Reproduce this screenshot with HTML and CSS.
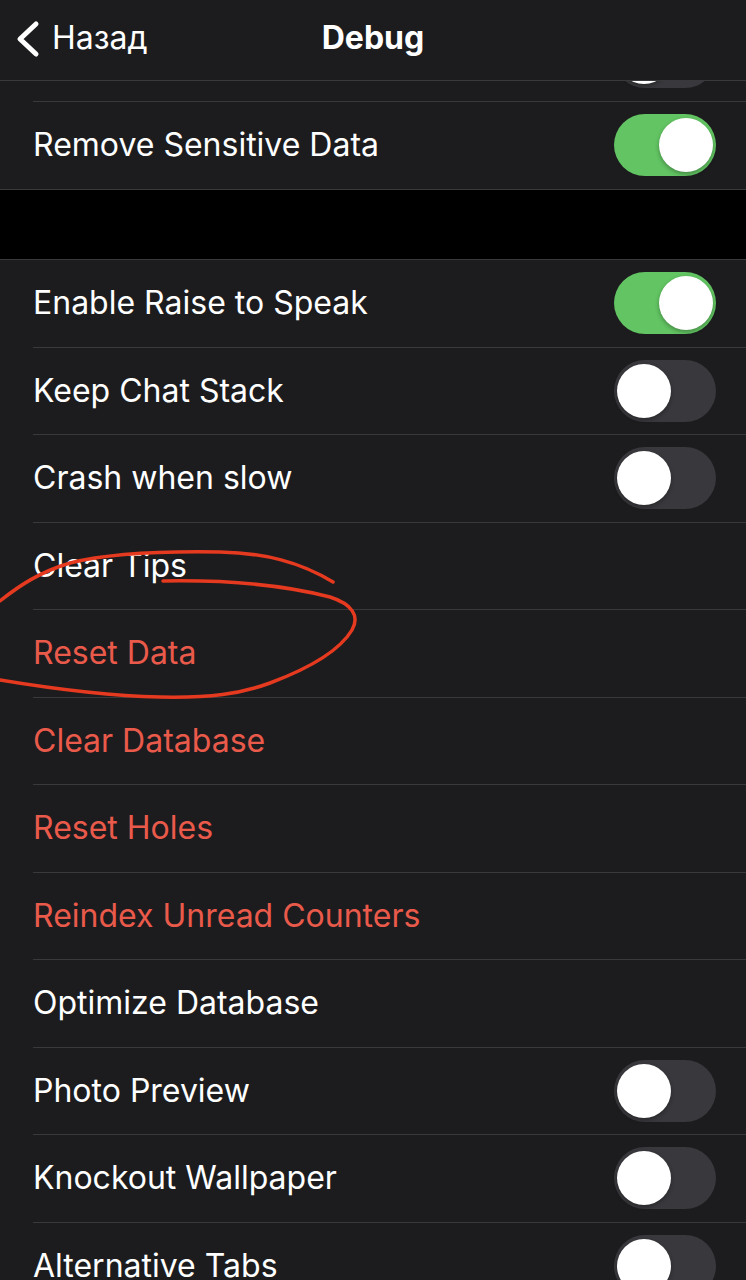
FILE: index.html
```html
<!DOCTYPE html>
<html lang="ru">
<head>
<meta charset="utf-8"/>
<meta name="viewport" content="width=device-width,initial-scale=1.0"/>
    <title>Debug</title>
    <link rel="stylesheet" href="styles.css">
</head>
<body>
<section id="screen">
    <header class="navbar">
        <a class="back" href="#">
            <svg class="chev" width="26" height="40" viewBox="0 0 26 40"><path d="M22 5 L6 20 L22 35" fill="none" stroke="#fff" stroke-width="5" stroke-linecap="round" stroke-linejoin="round"/></svg>
            <span>Назад</span>
        </a>
        <h1 class="title">Debug</h1>
    </header><!-- navbar -->

    <main class="scroll">
        <ul class="group group_first">
            <li class="row"><span class="label">Hidden</span><span class="toggle"></span></li>
            <li class="row"><span class="label">Remove Sensitive Data</span><span class="toggle on"></span></li>
        </ul>

        <div class="gap"></div>

        <ul class="group">
            <li class="row"><span class="label">Enable Raise to Speak</span><span class="toggle on"></span></li>
            <li class="row"><span class="label">Keep Chat Stack</span><span class="toggle"></span></li>
            <li class="row"><span class="label">Crash when slow</span><span class="toggle"></span></li>
            <li class="row"><span class="label">Clear Tips</span></li>
            <li class="row"><span class="label red">Reset Data</span></li>
            <li class="row"><span class="label red">Clear Database</span></li>
            <li class="row"><span class="label red">Reset Holes</span></li>
            <li class="row"><span class="label red">Reindex Unread Counters</span></li>
            <li class="row"><span class="label">Optimize Database</span></li>
            <li class="row"><span class="label">Photo Preview</span><span class="toggle"></span></li>
            <li class="row"><span class="label">Knockout Wallpaper</span><span class="toggle"></span></li>
            <li class="row"><span class="label">Alternative Tabs</span><span class="toggle"></span></li>
        </ul>
    </main><!-- scroll -->

    <!-- red pen mark over the screenshot -->
    <svg class="scribble" width="746" height="1280" viewBox="0 0 746 1280">
        <path d="M0 601 C20 585 40 572 70 563 C110 553 160 551 220 552 C265 553 300 562 333 582" fill="none" stroke="#e53a1f" stroke-width="3.5" stroke-linecap="round"/>
        <path d="M163 581 C220 580 280 584 330 597 C352 604 360 616 352 630 C340 650 310 668 270 683 C240 694 210 698 160 697 C110 696 60 690 0 680" fill="none" stroke="#e53a1f" stroke-width="3.5" stroke-linecap="round"/>
    </svg>
</section>
</body>
</html>
```

FILE: styles.css
```css
*{margin:0;padding:0;box-sizing:border-box;}
li{list-style:none;}
html,body{background:#1c1c1e;}
body{
    font-family:Inter,Roboto,"Liberation Sans",sans-serif;
    color:#fff;
    overflow:hidden;}

#screen{
    position:relative; overflow:hidden;
    width:746px;height:1280px;
    display:flex;flex-direction:column;}

/*  */
.navbar{
    flex:none;
    display:flex;align-items:center;
    position:relative;
    height:81px;
    background:#1c1c1e;
    border-bottom:1px solid #39393c;}

.back{
    display:flex;align-items:center;gap:12px;
    padding:0 0 4px 14px;
    color:#fff;text-decoration:none;
    font-size:32px;line-height:44px;}

.chev{display:block;margin-top:2px;}

.title{
    position:absolute;
    left:50%;top:50%;
    transform:translate(-50%,-50%);
    margin-top:-2px;
    font-size:32px;font-weight:700;line-height:44px;}

/*  */
.scroll{flex:1;overflow:hidden;}

.group{background:#1c1c1e;}
.group_first{margin-top:-67px;border-bottom:1px solid #39393c;}

.gap{height:70px;background:#000;border-bottom:1px solid #39393c;}

.row{
    display:flex;align-items:center;justify-content:space-between;
    height:87.5px;
    margin-left:33px;
    padding:0 30px 0 0;
    border-bottom:1px solid #39393c;}
.group .row:last-child{border-bottom:none;}

.label{font-size:32px;line-height:44px;}
.label.red{color:#ea5a4b;}

/*  */
.toggle{
    position:relative;
    flex:none;
    width:102px;height:62px;
    border-radius:31px;
    background:#39393d;}
.toggle::after{
    content:"";
    position:absolute;
    left:3px;top:4px;
    width:54px;height:54px;
    border-radius:50%;
    background:#fff;
    box-shadow:0 2px 4px rgba(0,0,0,.3);}
.toggle.on{background:#62c462;}
.toggle.on::after{left:auto;right:3px;}

.scribble{position:absolute;left:0;top:0;pointer-events:none;}
```
